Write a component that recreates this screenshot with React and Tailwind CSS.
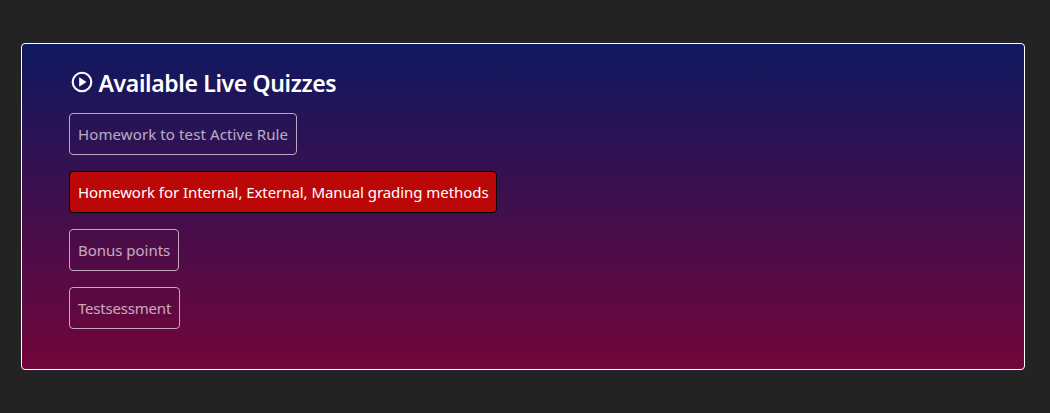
const quizzes = [
  { title: 'Homework to test Active Rule', size: 'w-[228px]', tracking: 'tracking-[0.11px]' },
  { title: 'Homework for Internal, External, Manual grading methods', size: 'w-[428px]', tracking: 'tracking-[-0.06px]', active: true },
  { title: 'Bonus points', size: 'w-[110px]', tracking: 'tracking-[-0.02px]' },
  { title: 'Testsessment', size: 'w-[111px]', tracking: 'tracking-[-0.2px]' },
];

function PlayIcon() {
  return (
    <svg className="mt-[2px] size-[22px] shrink-0" viewBox="0 0 22 22" fill="none">
      <circle cx="11" cy="11" r="9.3" stroke="white" strokeWidth="2.1" />
      <path d="M8.2 6.2v9.6l7.3-4.8z" fill="white" />
    </svg>
  );
}

function QuizButton({ title, size, tracking, active }) {
  const tone = active
    ? 'border-black bg-[#bb0707] text-white'
    : 'border-white text-white opacity-65';
  return (
    <button
      disabled={!active}
      className={`flex h-[42px] items-center rounded-[4px] border pl-2 text-left text-[15px] leading-6 whitespace-nowrap ${size} ${tone}`}
    >
      <span className={tracking}>{title}</span>
    </button>
  );
}

export default function App() {
  return (
    <main className="h-[413px] bg-[#232323] pt-[43px] pl-[21px] font-['Segoe_UI','Noto_Sans',sans-serif]">
      <section className="h-[327px] w-[1004px] rounded-[4px] border border-white bg-linear-to-b/srgb from-[#0f1860] to-[#72053a] pt-[25px] pl-[47px]">
        <h2 className="flex h-[29px] items-start gap-[5.5px] pl-[2px] text-[23px] leading-[29px] font-semibold whitespace-nowrap text-white">
          <PlayIcon />
          <span className="tracking-[-0.36px]">Available Live Quizzes</span>
        </h2>
        <div className="mt-[15px] flex flex-col items-start gap-4">
          {quizzes.map((quiz) => (
            <QuizButton key={quiz.title} {...quiz} />
          ))}
        </div>
      </section>
    </main>
  );
}
